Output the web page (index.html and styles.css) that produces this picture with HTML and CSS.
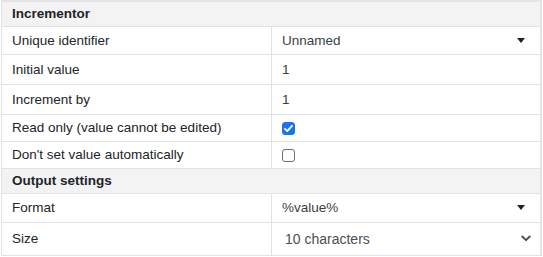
FILE: index.html
```html
<!DOCTYPE html>
<html lang="en">
<head>
    <meta charset="UTF-8">
    <title>Incrementor</title>
    <link rel="stylesheet" href="styles.css">
</head>
<body>
    <table class="props">
        <tr class="section"><th colspan="2">Incrementor</th></tr>
        <tr class="r-sel">
            <td class="label">Unique identifier</td>
            <td class="value">
                <div class="dropdown"><span>Unnamed</span><span class="caret"></span></div>
            </td>
        </tr>
        <tr class="r-text">
            <td class="label">Initial value</td>
            <td class="value">1</td>
        </tr>
        <tr class="r-text">
            <td class="label">Increment by</td>
            <td class="value">1</td>
        </tr>
        <tr class="r-check">
            <td class="label">Read only (value cannot be edited)</td>
            <td class="value"><span class="box checked">
                <svg width="13" height="13" viewBox="0 0 13 13"><path d="M3 6.8 5.3 9.2 10 3.8" fill="none" stroke="#fff" stroke-width="1.8" stroke-linecap="round" stroke-linejoin="round"/></svg>
            </span></td>
        </tr>
        <tr class="r-check">
            <td class="label">Don't set value automatically</td>
            <td class="value"><span class="box"></span></td>
        </tr>
        <tr class="section"><th colspan="2">Output settings</th></tr>
        <tr class="r-sel2">
            <td class="label">Format</td>
            <td class="value">
                <div class="dropdown"><span>%value%</span><span class="caret"></span></div>
            </td>
        </tr>
        <tr class="r-native">
            <td class="label">Size</td>
            <td class="value">
                <div class="native"><span>10 characters</span>
                    <svg width="10" height="7" viewBox="0 0 10 7"><path d="M1.3 1.5 5 5.2 8.7 1.5" fill="none" stroke="#4a4f55" stroke-width="1.9" stroke-linecap="round" stroke-linejoin="round"/></svg>
                </div>
            </td>
        </tr>
    </table>
</body>
</html>
```
FILE: styles.css
```css
*{
    margin: 0;
    padding: 0;
    box-sizing: border-box;
}
body{
    background: #fff;
    font-family: "Liberation Sans", Arial, sans-serif;
    font-size: 13.5px;
    color: #212529;
}
.props{
    width: 541px;
    margin-left: 1px;
    border-collapse: collapse;
    border-top: 2px solid #e2e4e7;
    border-right: 2px solid #e2e4e7;
}
.props td,.props th{
    border: 1px solid #e0e2e5;
    text-align: left;
    vertical-align: middle;
    padding: 0 0 0 10px;
}
.props .section th{
    background: #f3f3f3;
    font-weight: bold;
    height: 25px;
}
.props .label{
    width: 270px;
}
.props .value{
    padding-left: 10px;
    padding-right: 14px;
    color: #3a3f44;
}
.r-sel td{ height: 28px; }
.r-text td{ height: 30px; }
.r-check td{ height: 27px; }
.r-sel2 td{ height: 29px; }
.r-native td{ height: 33px; }

.dropdown,.native{
    display: flex;
    align-items: center;
    justify-content: space-between;
}
.caret{
    width: 0;
    height: 0;
    border-left: 4.5px solid transparent;
    border-right: 4.5px solid transparent;
    border-top: 5px solid #222;
    margin-right: 1px;
}
.native span{
    padding-left: 3px;
    font-size: 14px;
    color: #4a4f55;
}
.native svg{
    margin-right: -5px;
}
.box{
    display: block;
    width: 13px;
    height: 13px;
    border: 1px solid #6b6f74;
    border-radius: 3px;
    margin-top: 2px;
}
.box.checked{
    background: #1a73f0;
    border-color: #1a73f0;
    position: relative;
}
.box.checked svg{
    position: absolute;
    left: -1px;
    top: -1px;
}
```
